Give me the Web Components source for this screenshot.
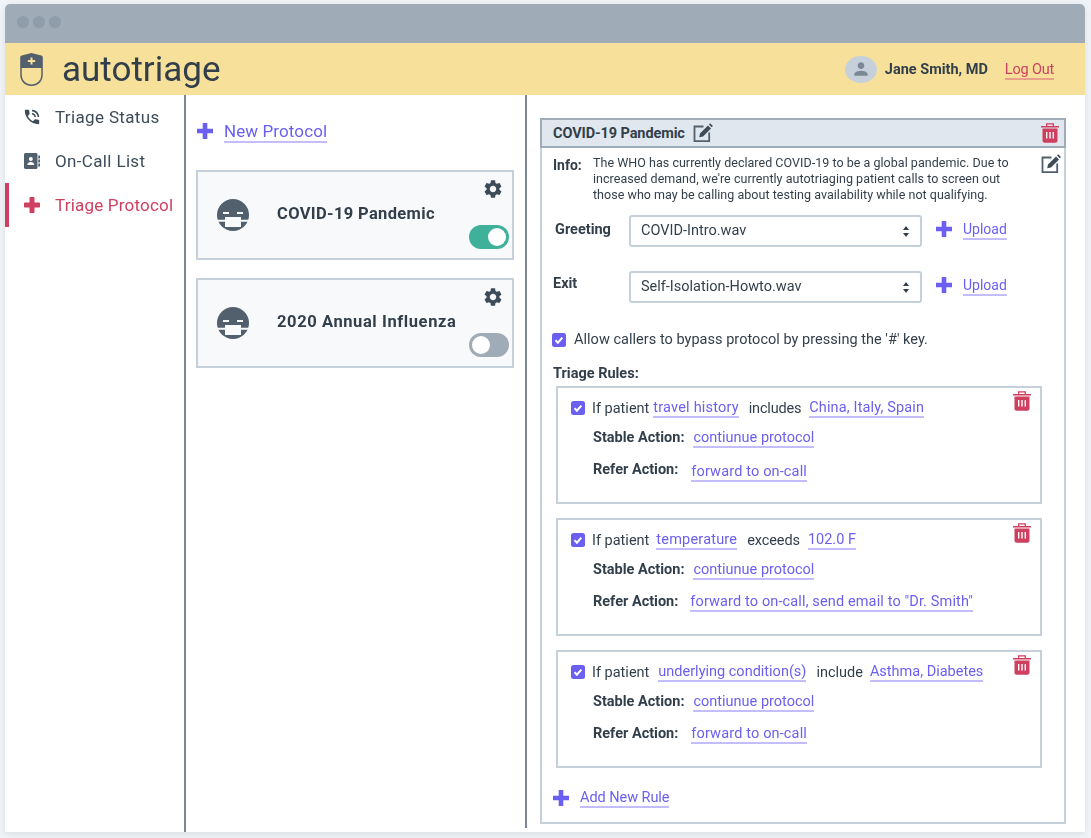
<!DOCTYPE html>
<html lang="en">
<head>
<meta charset="utf-8">
<title>autotriage</title>
<style>
html, body { margin: 0; height: 100%; }
body {
  background: #f0f4f8;
  color: #323f4b;
  font-family: Roboto, "Liberation Sans", sans-serif;
  font-size: 15px;
  overflow: hidden;
}
</style>
</head>
<body>
<app-window>
  <app-header slot="header" user="Jane Smith, MD"></app-header>
  <side-nav slot="nav">
    <nav-item icon="phone">Triage Status</nav-item>
    <nav-item icon="book">On-Call List</nav-item>
    <nav-item icon="cross" active style="letter-spacing:.2px">Triage Protocol</nav-item>
  </side-nav>
  <protocol-list slot="list">
    <protocol-card on>COVID-19 Pandemic</protocol-card>
    <protocol-card style="--title-spacing:.6px">2020 Annual Influenza</protocol-card>
  </protocol-list>
  <protocol-detail slot="detail" name="COVID-19 Pandemic">
    <rule-card>
      <span slot="cond">If patient</span>
      <ui-link slot="cond" style="margin-left:4px;letter-spacing:.2px">travel history</ui-link>
      <span slot="cond" style="margin-left:10px;letter-spacing:-.2px">includes</span>
      <ui-link slot="cond" style="margin-left:8px;letter-spacing:.15px">China, Italy, Spain</ui-link>
      <ui-link slot="stable" style="margin-left:1px">contiunue protocol</ui-link>
      <ui-link slot="refer" style="margin:2px 0 0 5px;letter-spacing:.15px">forward to on-call</ui-link>
    </rule-card>
    <rule-card>
      <span slot="cond">If patient</span>
      <ui-link slot="cond" style="margin-left:7px;letter-spacing:.2px">temperature</ui-link>
      <span slot="cond" style="margin-left:10px;letter-spacing:-.1px">exceeds</span>
      <ui-link slot="cond" style="margin-left:8px">102.0 F</ui-link>
      <ui-link slot="stable" style="margin-left:1px">contiunue protocol</ui-link>
      <ui-link slot="refer" style="margin-left:4px;letter-spacing:.13px">forward to on-call, send email to "Dr. Smith"</ui-link>
    </rule-card>
    <rule-card>
      <span slot="cond">If patient</span>
      <ui-link slot="cond" style="margin-left:9px">underlying condition(s)</ui-link>
      <span slot="cond" style="margin-left:10px">include</span>
      <ui-link slot="cond" style="margin-left:7px">Asthma, Diabetes</ui-link>
      <ui-link slot="stable" style="margin-left:1px">contiunue protocol</ui-link>
      <ui-link slot="refer" style="margin-left:5px;letter-spacing:.15px">forward to on-call</ui-link>
    </rule-card>
  </protocol-detail>
</app-window>

<script>
'use strict';

const ICONS = {
  phone: '<svg viewBox="2 2 20 20" width="16" height="16" fill="#3e4c59"><path d="M20 15.5c-1.25 0-2.45-.2-3.57-.57-.35-.11-.74-.03-1.02.24l-2.2 2.2c-2.83-1.44-5.15-3.75-6.59-6.59l2.2-2.21c.28-.26.36-.65.25-1C8.7 6.45 8.5 5.25 8.5 4c0-.55-.45-1-1-1H4c-.55 0-1 .45-1 1 0 9.39 7.61 17 17 17 .55 0 1-.45 1-1v-3.5c0-.55-.45-1-1-1zM19 12h2c0-4.97-4.03-9-9-9v2c3.87 0 7 3.13 7 7zm-4 0h2c0-2.76-2.24-5-5-5v2c1.66 0 3 1.34 3 3z"/></svg>',
  book: '<svg viewBox="0 0 16 16" width="16" height="16"><path fill="#52606d" d="M0 1.500C0 .7.7 0 1.500 0H12c.8 0 1.500.7 1.500 1.500v13c0 .8-.7 1.500-1.500 1.500H1.500C.7 16 0 15.300 0 14.500z"/><path fill="#52606d" d="M14.300 2.500H16v3h-1.700zM14.300 6.500H16v3h-1.700zM14.300 10.500H16v3h-1.700z"/><circle cx="6.800" cy="6" r="2" fill="#fff"/><path fill="#fff" d="M3.300 12c0-2 1.600-3 3.500-3s3.500 1 3.500 3z"/></svg>',
  cross: '<svg viewBox="0 0 16 16" width="16" height="16"><path fill="#cf3f5f" d="M5.500 1c0-.6.4-1 1-1h3c.6 0 1 .4 1 1v4.500H15c.6 0 1 .4 1 1v3c0 .6-.4 1-1 1h-4.500V15c0 .6-.4 1-1 1h-3c-.6 0-1-.4-1-1v-4.500H1c-.6 0-1-.4-1-1v-3c0-.6.4-1 1-1h4.500z"/></svg>',
  plus: '<svg viewBox="0 0 16 16" width="16" height="16"><path fill="#6b5ff2" d="M5.700 0h4.600v5.700H16v4.600h-5.700V16H5.700v-5.700H0V5.700h5.700z"/></svg>',
  gear: '<svg viewBox="2 2 20 20" width="18" height="18" fill="#3e4c59"><path d="M19.140 12.940c.04-.3.06-.61.06-.94 0-.32-.02-.64-.07-.94l2.030-1.580c.18-.14.23-.41.12-.61l-1.920-3.320c-.12-.22-.37-.29-.59-.22l-2.390.96c-.5-.38-1.030-.7-1.620-.94l-.36-2.540c-.04-.24-.24-.41-.48-.41h-3.840c-.24 0-.43.17-.47.41l-.36 2.540c-.59.24-1.130.57-1.620.94l-2.390-.96c-.22-.08-.47 0-.59.22L2.740 8.870c-.12.21-.08.47.12.61l2.030 1.580c-.05.3-.09.63-.09.94s.02.64.07.94l-2.030 1.580c-.18.14-.23.41-.12.61l1.920 3.320c.12.22.37.29.59.22l2.390-.96c.5.38 1.030.7 1.620.94l.36 2.540c.05.24.24.41.48.41h3.840c.24 0 .44-.17.47-.41l.36-2.540c.59-.24 1.130-.56 1.620-.94l2.390.96c.22.08.47 0 .59-.22l1.920-3.320c.12-.22.07-.47-.12-.61l-2.010-1.580zM12 15.600c-1.980 0-3.600-1.620-3.600-3.600s1.620-3.600 3.600-3.600 3.600 1.620 3.600 3.600-1.620 3.600-3.600 3.600z"/></svg>',
  mask: '<svg viewBox="0 0 32 32" width="32" height="32"><circle cx="16" cy="16" r="16" fill="#52606d"/><path fill="#f7f9fb" d="M6 13h6v2H6zM20 13h6v2h-6zM8 18h16v2.800h8v2H24V28H8v-5.200H0v-2h8z"/></svg>',
  edit: '<svg viewBox="0 0 20 20" width="20" height="20"><path fill="none" stroke="#52606d" stroke-width="1.800" d="M10.500 3.500H1.500v14.700h14.700V9.500"/><path fill="#3e4c59" d="M7 10.500 15 2.500l3 3-8 8-3.800.8zM16 1.500 17.200.3l2.700 2.700-1.200 1.200z"/></svg>',
  trash: '<svg viewBox="0 0 18 20" width="18" height="20"><path fill="#cf3f5f" d="M1.500 5.500h15V17.500c0 1.300-1 2.300-2.300 2.300H3.800c-1.300 0-2.300-1-2.300-2.300zM0 3h18v1.400H0z"/><path fill="none" stroke="#cf3f5f" stroke-width="1.300" d="M5.700 3V.8h6.600V3"/><path fill="#fff" d="M5 9h1.400v6.500H5zM8.300 9h1.400v6.500H8.300zM11.600 9H13v6.500h-1.400z"/></svg>',
  check: '<svg viewBox="0 0 14 14" width="14" height="14"><rect width="14" height="14" rx="2.500" fill="#6b5ff2"/><path fill="none" stroke="#fff" stroke-width="2" d="M3.500 7.300l2.400 2.400 4.400-5"/></svg>',
  logo: '<svg viewBox="0 0 23 33" width="23" height="33"><path fill="#52606d" d="M11.500 0l9.800 2.500c.9.300 1.500 1 1.500 2V15H.2V4.500c0-1 .6-1.700 1.500-2z"/><path fill="none" stroke="#52606d" stroke-width="1.500" d="M1 15v7c0 6 4.600 10.200 10.500 10.200S22 28 22 22v-7"/><path fill="#f7e09a" d="M10.500 4.500h2v2.500h2.700v2h-2.700v2.500h-2V9H7.800V7h2.700z"/></svg>',
  user: '<svg viewBox="0 0 24 24" width="20" height="20" fill="#7b8794"><path d="M12 12c2.210 0 4-1.790 4-4s-1.790-4-4-4-4 1.790-4 4 1.790 4 4 4zm0 2c-2.670 0-8 1.340-8 4v2h16v-2c0-2.660-5.330-4-8-4z"/></svg>'
};

function defineEl(name, render) {
  customElements.define(name, class extends HTMLElement {
    constructor() {
      super();
      this.attachShadow({mode: 'open'});
    }
    connectedCallback() {
      this.shadowRoot.innerHTML = render(this);
    }
  });
}

defineEl('app-window', () => `
<style>
:host {
  display: grid;
  position: fixed;
  inset: 4px 6px 6px 5px;
  grid-template: 39px 52px 1fr / 181px 341px 1fr;
  background: #fff;
  border-radius: 5px 5px 0 0;
  box-shadow: 0 2px 6px rgba(50, 63, 75, .12);
  overflow: hidden;
}
.bar {
  grid-column: 1 / -1;
  background: #9fabb6;
  display: flex;
  align-items: center;
  gap: 4px;
  padding: 0 0 3px 12px;
}
.bar i { width: 12px; height: 12px; border-radius: 50%; background: #8f9ca9; }
.head { grid-column: 1 / -1; display: flex; min-width: 0; }
.head ::slotted(*) { flex: 1; }
.nav { border-right: 2px solid #7b8794; }
.list { border-right: 2px solid #7b8794; margin-bottom: 4px; }
</style>
<div class="bar"><i></i><i></i><i></i></div>
<div class="head"><slot name="header"></slot></div>
<div class="nav"><slot name="nav"></slot></div>
<div class="list"><slot name="list"></slot></div>
<div><slot name="detail"></slot></div>
`);

defineEl('app-header', (el) => `
<style>
:host {
  display: flex;
  align-items: center;
  background: #f7e09a;
  padding: 0 31px 0 15px;
}
.brand {
  margin-left: 19px;
  font-size: 35px;
  color: #323f4b;
  flex: 1;
}
.avatar {
  width: 32px;
  height: 27px;
  border-radius: 50%;
  background: #c5d0da;
  display: flex;
  align-items: center;
  justify-content: center;
  margin-right: 8px;
}
.name { font-weight: 700; font-size: 14.500px; margin-right: 17px; }
ui-link { --link: #cf3f5f; --line: #e8a08a; font-size: 14.500px; letter-spacing: -.2px; margin-top: 2px; }
</style>
<svg-icon name="logo"></svg-icon>
<span class="brand">autotriage</span>
<span class="avatar"><svg-icon name="user"></svg-icon></span>
<span class="name">${el.getAttribute('user')}</span>
<ui-link>Log Out</ui-link>
`);

defineEl('svg-icon', (el) => `
<style>:host { display: inline-flex; flex: none; } svg { display: block; }</style>
${ICONS[el.getAttribute('name')]}
`);

defineEl('ui-link', () => `
<style>
:host {
  display: inline-block;
  color: var(--link, #6b5ff2);
  border-bottom: 2px solid var(--line, #c4bdfb);
  line-height: 17px;
  white-space: nowrap;
}
</style>
<slot></slot>
`);

defineEl('side-nav', () => `
<style>:host { display: block; }</style>
<slot></slot>
`);

defineEl('nav-item', (el) => `
<style>
:host {
  display: flex;
  align-items: center;
  height: 44px;
  padding-left: 19px;
  font-size: 17px;
  letter-spacing: .35px;
  color: ${el.hasAttribute('active') ? '#cf3f5f' : '#3e4c59'};
  box-sizing: border-box;
  ${el.hasAttribute('active') ? 'box-shadow: inset 4px 0 #cf3f5f;' : ''}
}
span { margin-left: 15px; white-space: nowrap; }
</style>
<svg-icon name="${el.getAttribute('icon')}"></svg-icon>
<span><slot></slot></span>
`);

defineEl('protocol-list', () => `
<style>
:host { display: block; padding: 26px 11px 0 10px; }
.new {
  display: flex;
  align-items: center;
  gap: 11px;
  margin: 0 0 27px 1px;
  font-size: 17px;
  letter-spacing: .1px;
}
.new svg-icon { margin-top: -2px; }
ui-link { line-height: 20px; }
.cards { display: flex; flex-direction: column; gap: 18px; }
</style>
<div class="new"><svg-icon name="plus"></svg-icon><ui-link>New Protocol</ui-link></div>
<div class="cards"><slot></slot></div>
`);

defineEl('protocol-card', (el) => `
<style>
:host {
  display: grid;
  grid-template-columns: 32px minmax(0, 1fr) 40px;
  align-items: center;
  column-gap: 28px;
  height: 90px;
  box-sizing: border-box;
  padding: 9px 3px 9px 19px;
  background: #f7f9fb;
  border: 2px solid #c5d0da;
}
.title {
  font-weight: 700;
  font-size: 16.500px;
  letter-spacing: var(--title-spacing, .35px);
  white-space: nowrap;
  margin-top: -4px;
}
.side { display: flex; flex-direction: column; align-items: flex-end; justify-content: space-between; height: 100%; }
.side svg-icon { margin: -1px 7px 0 0; }
</style>
<svg-icon name="mask"></svg-icon>
<span class="title"><slot></slot></span>
<div class="side"><svg-icon name="gear"></svg-icon><ui-toggle ${el.hasAttribute('on') ? 'on' : ''}></ui-toggle></div>
`);

defineEl('ui-toggle', (el) => `
<style>
:host {
  display: flex;
  flex: none;
  justify-content: ${el.hasAttribute('on') ? 'flex-end' : 'flex-start'};
  align-items: center;
  width: 40px;
  height: 24px;
  box-sizing: border-box;
  padding: 0 3px;
  border-radius: 12px;
  background: ${el.hasAttribute('on') ? '#3fb09a' : '#9fabb6'};
}
i { width: 18px; height: 18px; border-radius: 50%; background: #fff; }
</style>
<i></i>
`);

defineEl('file-row', (el) => `
<style>
:host { display: flex; align-items: center; height: 32px; }
.label {
  width: calc(74px - var(--label-left, 0px));
  margin: var(--label-top, -3px) 0 0 var(--label-left, 0px);
  font-weight: 700;
  font-size: 14.500px;
}
.select {
  width: 293px;
  height: 32px;
  box-sizing: border-box;
  border: 2px solid #c5d0da;
  border-radius: 3px;
  display: flex;
  align-items: center;
  justify-content: space-between;
  padding: 0 11px 2px 10px;
  font-size: 14.500px;
  background: #fff;
}
.arrows { display: block; margin-top: 2px; }
svg-icon { margin: -5px 11px 0 14px; }
ui-link { margin-top: -1px; }
</style>
<span class="label">${el.getAttribute('label')}</span>
<div class="select"><span>${el.getAttribute('file')}</span>
<svg class="arrows" width="6" height="11" viewBox="0 0 6 11"><path fill="#323f4b" d="M3 0l3 4H0zM3 11L0 7h6z"/></svg></div>
<svg-icon name="plus"></svg-icon>
<ui-link>Upload</ui-link>
`);

defineEl('protocol-detail', (el) => `
<style>
:host {
  display: block;
  margin: 23px 19px 8px 13px;
  height: 706px;
  box-sizing: border-box;
  border: 2px solid #c5d0da;
  border-top: 0;
  font-size: 14px;
}
.title {
  display: flex;
  align-items: center;
  height: 30px;
  margin: 0 -2px;
  box-sizing: border-box;
  padding: 0 5px 0 11px;
  background: #e1e7ee;
  border: 2px solid #9fabb6;
  font-weight: 700;
  font-size: 14.500px;
  letter-spacing: -.1px;
}
.title svg-icon[name=edit] { margin-left: 8px; }
.title svg-icon[name=trash] { margin: -1px 0 0 auto; }
.info { display: flex; padding: 7px 3px 0 11px; }
.info b { width: 40px; font-size: 14px; line-height: 21px; flex: none; }
.info p { margin: 0; font-size: 12.500px; line-height: 16px; letter-spacing: .03px; flex: 1; white-space: nowrap; }
.info svg-icon { margin-top: -1px; }
.files { padding: 12px 0 0 13px; display: flex; flex-direction: column; gap: 24px; }
.bypass {
  display: flex;
  align-items: center;
  gap: 8px;
  margin: 28px 0 0 10px;
  font-size: 14.500px;
  letter-spacing: .03px;
}
h3 { margin: 17px 0 4px 11px; font-size: 14.500px; line-height: 17px; }
.rules { display: flex; flex-direction: column; gap: 14px; margin: 0 22px 0 14px; }
.add { display: flex; align-items: center; gap: 11px; margin: 21px 0 0 11px; font-size: 14.500px; letter-spacing: -.05px; }
.add svg-icon { margin-top: -2px; }
</style>
<div class="title"><span>${el.getAttribute('name')}</span><svg-icon name="edit"></svg-icon><svg-icon name="trash"></svg-icon></div>
<div class="info"><b>Info:</b>
  <p>The WHO has currently declared COVID-19 to be a global pandemic. Due to<br>increased demand, we're currently autotriaging patient calls to screen out<br>those who may be calling about testing availability while not qualifying.</p>
  <svg-icon name="edit"></svg-icon></div>
<div class="files">
  <file-row label="Greeting" file="COVID-Intro.wav"></file-row>
  <file-row label="Exit" file="Self-Isolation-Howto.wav" style="--label-left:-2px;--label-top:-7px"></file-row>
</div>
<div class="bypass"><svg-icon name="check"></svg-icon><span>Allow callers to bypass protocol by pressing the '#' key.</span></div>
<h3>Triage Rules:</h3>
<div class="rules"><slot></slot></div>
<div class="add"><svg-icon name="plus"></svg-icon><ui-link>Add New Rule</ui-link></div>
`);

defineEl('rule-card', () => `
<style>
:host {
  display: flex;
  height: 118px;
  box-sizing: border-box;
  border: 2px solid #c5d0da;
  padding: 11px 9px 0 13px;
  font-size: 14.500px;
}
.main { flex: 1; min-width: 0; }
.cond { display: flex; align-items: center; height: 19px; }
.cond svg-icon { margin: -2px 7px 0 0; }
.line { display: flex; align-items: flex-start; margin: 0 0 0 22px; height: 32px; }
.line b { white-space: nowrap; margin-right: 8px; }
.first { margin-top: 11px; }
svg-icon[name=trash] { margin-top: -8px; }
</style>
<div class="main">
  <div class="cond"><svg-icon name="check"></svg-icon><slot name="cond"></slot></div>
  <div class="line first"><b>Stable Action:</b><slot name="stable"></slot></div>
  <div class="line"><b>Refer Action:</b><slot name="refer"></slot></div>
</div>
<svg-icon name="trash"></svg-icon>
`);
</script>
</body>
</html>
